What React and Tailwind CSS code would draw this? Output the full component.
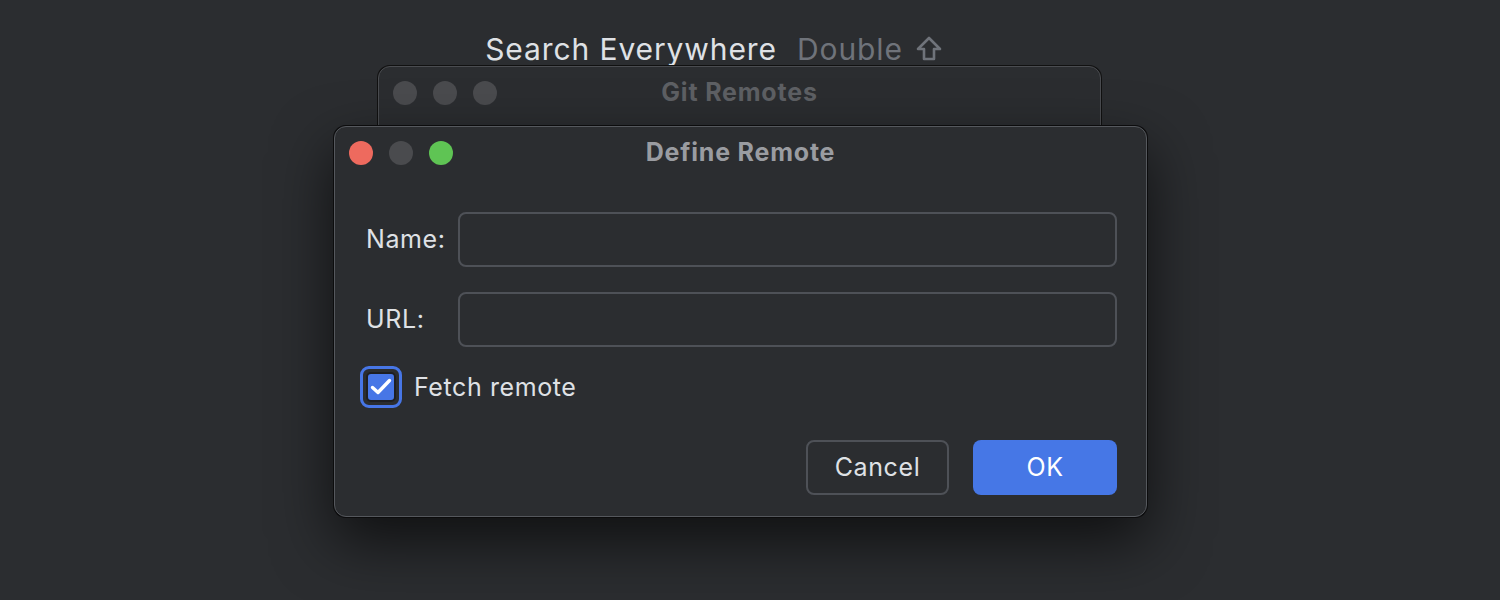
import React from 'react';

const font = { fontFamily: 'Inter, "Noto Sans", sans-serif' };

const Lights = ({ colors }) => (
  <div className="flex items-center gap-4">
    {colors.map((c, i) => (
      <span key={i} className={`w-6 h-6 rounded-full ${c}`} />
    ))}
  </div>
);

const ShiftIcon = () => (
  <svg width="28" height="28" viewBox="0 0 28 28" className="inline-block">
    <path
      d="M14 3 L25 14 L19 14 L19 24 L9 24 L9 14 L3 14 Z"
      fill="none"
      stroke="#6f737a"
      strokeWidth="2.6"
      strokeLinejoin="round"
    />
  </svg>
);

export default function App() {
  return (
    <div
      className="w-[1500px] h-[600px] bg-[#2b2d30] overflow-hidden relative text-[#dfe1e5]"
      style={font}
    >
      {/* hint line */}
      <div className="flex justify-center items-center gap-[20px] pt-[29px] pr-[72px] text-[30px] leading-[40px] tracking-[0.9px]">
        <span className="text-[#dfe1e5]">Search Everywhere</span>
        <span className="flex items-center gap-[12px] text-[#6f737a]">
          Double
          <ShiftIcon />
        </span>
      </div>

      {/* background window */}
      <div className="absolute left-[378px] top-[66px] w-[723px] h-[200px] rounded-t-[12px] bg-[#2b2d30] border border-[#4a4c50] shadow-[0_0_0_1px_#111]">
        <div className="relative h-[52px] flex items-center px-[14px]">
          <Lights colors={['bg-[#4a4b4e]', 'bg-[#4a4b4e]', 'bg-[#4a4b4e]']} />
          <div className="absolute inset-0 flex items-center justify-center font-bold text-[25px] tracking-[0.8px] text-[#5e6064]">
            Git Remotes
          </div>
        </div>
      </div>

      {/* dialog */}
      <div className="absolute left-[334px] top-[126px] w-[813px] h-[391px] rounded-[12px] bg-[#2b2d30] border border-[#55585d] shadow-[0_0_0_1px_#0c0c0d,0_24px_60px_rgba(0,0,0,0.65)] flex flex-col">
        <div className="relative h-[52px] flex items-center px-[14px] shrink-0">
          <Lights colors={['bg-[#ee6a5e]', 'bg-[#4a4b4e]', 'bg-[#5fc454]']} />
          <div className="absolute inset-0 flex items-center justify-center font-bold text-[25px] tracking-[0.8px] text-[#9a9ca1]">
            Define Remote
          </div>
        </div>

        <div className="flex flex-col px-[31px] pt-[33px] pr-[29px] text-[25px] tracking-[0.6px]">
          <div className="flex items-center">
            <span className="w-[92px]">Name:</span>
            <div className="flex-1 h-[55px] rounded-[8px] border-2 border-[#4e5157]" />
          </div>
          <div className="flex items-center mt-[25px]">
            <span className="w-[92px]">URL:</span>
            <div className="flex-1 h-[55px] rounded-[8px] border-2 border-[#4e5157]" />
          </div>
          <div className="flex items-center mt-[19px] -ml-[6px] gap-[12px]">
            <div className="w-[42px] h-[42px] rounded-[9px] border-[3px] border-[#4776e6] flex items-center justify-center">
              <div className="w-[30px] h-[30px] rounded-[5px] bg-[#4776e6] border-2 border-[#1e1f22] flex items-center justify-center">
                <svg width="22" height="18" viewBox="0 0 22 18">
                  <path
                    d="M2.5 9.5 L8 14.5 L19.5 2.5"
                    fill="none"
                    stroke="#fff"
                    strokeWidth="3.4"
                    strokeLinecap="round"
                    strokeLinejoin="round"
                  />
                </svg>
              </div>
            </div>
            <span className="mt-[2px]">Fetch remote</span>
          </div>
          <div className="flex justify-end gap-[24px] mt-[32px]">
            <button className="w-[143px] h-[55px] rounded-[8px] border-2 border-[#4e5157] text-[#dfe1e5] tracking-[0.6px]">
              Cancel
            </button>
            <button className="w-[144px] h-[55px] rounded-[8px] bg-[#4677e6] text-white tracking-[0.6px]">
              OK
            </button>
          </div>
        </div>
      </div>
    </div>
  );
}
